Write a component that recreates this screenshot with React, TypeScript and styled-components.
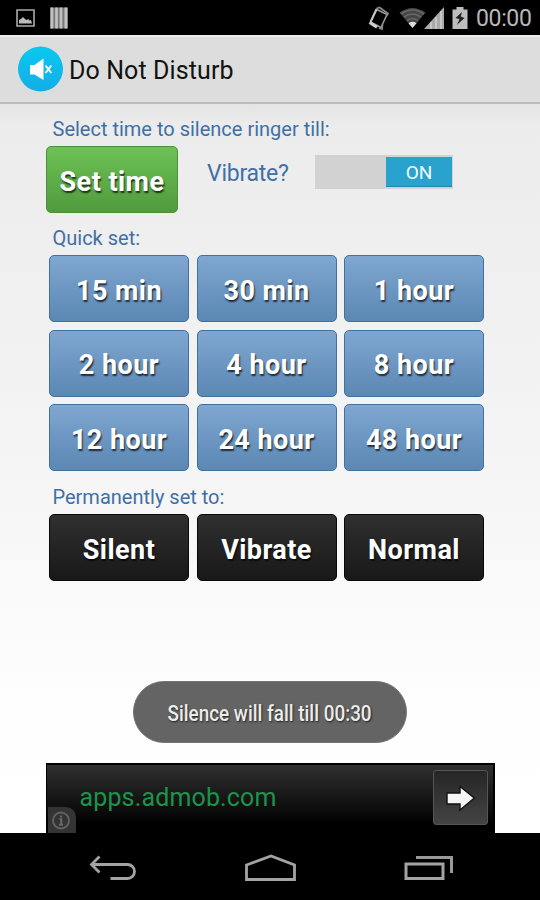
import React from "react";
import styled, { createGlobalStyle } from "styled-components";

const GlobalStyle = createGlobalStyle`
  * { box-sizing: border-box; }
  body { margin: 0; background: #fff; }
  button { border: 0; padding: 0; font: inherit; }
`;

const Screen = styled.div`
  width: 540px;
  height: 900px;
  display: flex;
  flex-direction: column;
  overflow: hidden;
  font-family: Roboto, sans-serif;
  background: #000;
`;

const StatusBar = styled.header`
  height: 35px;
  display: flex;
  align-items: center;
  justify-content: space-between;
  padding: 0 8px 0 16px;
  background: #000;
`;

const StatusIcons = styled.div`
  display: flex;
  align-items: center;
  height: 35px;
`;

const Clock = styled.span`
  margin-left: 8px;
  width: 56px;
  font-size: 23px;
  line-height: 35px;
  letter-spacing: -0.35px;
  padding-top: 2px;
  color: #b8b8b8;
  white-space: nowrap;
`;

const ActionBar = styled.div`
  height: 69px;
  display: flex;
  align-items: center;
  gap: 6px;
  padding: 0 18px 1px;
  background: #dddddd;
  border-top: 2px solid #ededed;
  border-bottom: 2px solid #bcbcbc;
`;

const Title = styled.h1`
  margin: 4px 0 0;
  font-size: 25px;
  font-weight: 400;
  letter-spacing: 0.1px;
  line-height: 32px;
  color: #111;
  white-space: nowrap;
`;

const Content = styled.main`
  flex: 1;
  display: flex;
  flex-direction: column;
  padding: 0 45px 0 46px;
  background: linear-gradient(#e4e4e4 0, #ececec 20px, #eeeeee 110px, #f5f5f5 370px, #fefefe 600px, #ffffff 100%);
`;

const Caption = styled.div<{ $top: number }>`
  height: 24px;
  margin: ${(p) => p.$top}px 0 0 6.5px;
  font-size: 20px;
  line-height: 24px;
  color: #4070a6;
  white-space: nowrap;
`;

const TimeRow = styled.div`
  display: flex;
  height: 67px;
  margin-top: 5px;
`;

const fills = {
  green: "linear-gradient(#6dc255, #509a3d)",
  blue: "linear-gradient(#7fa7d1, #5b87b3)",
  black: "linear-gradient(#303030, #181818)",
};
const edges = { green: "#4b9139", blue: "#41729f", black: "#080808" };

const PushButton = styled.button<{ $tone: keyof typeof fills; $width?: number }>`
  width: ${(p) => (p.$width ? `${p.$width}px` : "auto")};
  height: 67px;
  padding-top: 4px;
  border: 1.5px solid ${(p) => edges[p.$tone]};
  border-radius: 5px;
  background: ${(p) => fills[p.$tone]} border-box;
  color: #fff;
  font-size: 27px;
  font-weight: 700;
  line-height: 32px;
  letter-spacing: 0.45px;
  text-shadow: 1px 1.5px 1.5px rgba(0, 0, 0, 0.7);
  white-space: nowrap;
`;

const VibrateLabel = styled.span`
  width: 108px;
  margin: 14px 0 0 29px;
  font-size: 23px;
  line-height: 28px;
  letter-spacing: -0.25px;
  color: #4070a6;
`;

const Toggle = styled.div`
  width: 138px;
  height: 34px;
  margin-top: 9px;
  padding: 2px 1px 2px;
  display: flex;
  justify-content: flex-end;
  background: #d2d2d2;
`;

const Thumb = styled.div`
  width: 66px;
  height: 30px;
  background: #29a3cd;
  border-bottom: 1px solid #2188ad;
  color: #f3fbff;
  font-size: 19px;
  line-height: 32px;
  text-align: center;
`;

const ButtonGrid = styled.div<{ $top: number }>`
  display: grid;
  grid-template-columns: repeat(3, 140px);
  column-gap: 7.5px;
  row-gap: 7.5px;
  margin: ${(p) => p.$top}px 0 0 3px;
`;

const Toast = styled.div`
  width: 274px;
  height: 62px;
  margin: 100px 0 0 87px;
  border-radius: 31px;
  border: 1px solid #747474;
  background: #646464;
  display: flex;
  align-items: center;
  justify-content: center;
`;

const ToastText = styled.span`
  flex: none;
  font-size: 22.5px;
  font-weight: 500;
  line-height: 28px;
  padding-top: 2px;
  color: #ececec;
  text-shadow: 1px 1px 2px rgba(0, 0, 0, 0.7);
  white-space: nowrap;
  transform: scaleX(0.84);
`;

const AdBanner = styled.aside`
  position: relative;
  height: 70px;
  margin-top: auto;
  display: flex;
  justify-content: space-between;
  padding: 6px 5px 0 32.5px;
  border: solid #000;
  border-width: 2px 2px 0 1px;
  background: linear-gradient(#303030, #151515 50%, #000 88%);
`;

const AdLink = styled.span`
  margin-top: 11px;
  font-size: 25px;
  line-height: 32px;
  letter-spacing: 0.15px;
  color: #1c944b;
`;

const AdArrow = styled.div`
  width: 55px;
  height: 55px;
  margin-top: -1px;
  border: 1.5px solid #555;
  border-radius: 3px;
  background: linear-gradient(#262626, #444);
  display: flex;
  align-items: center;
  justify-content: center;
`;

const InfoCorner = styled.div`
  position: absolute;
  left: 1px;
  bottom: 0;
  width: 28px;
  height: 26px;
  padding: 2px 0 0 2px;
  border-top-right-radius: 10px;
  background: #343434;
`;

const NavBar = styled.footer`
  height: 67px;
  display: flex;
  align-items: center;
  justify-content: space-between;
  padding: 3px 86px 0 89px;
  background: #000;
`;

const Spacer = styled.span<{ $size: number }>`
  width: ${(p) => p.$size}px;
`;

const quickTimes = ["15 min", "30 min", "1 hour", "2 hour", "4 hour", "8 hour", "12 hour", "24 hour", "48 hour"];
const modes = ["Silent", "Vibrate", "Normal"];

const PictureIcon = () => (
  <svg width="19" height="18" viewBox="0 0 19 18">
    <path d="M1 1H18V17H1Z" fill="none" stroke="#aaa" strokeWidth="1.6" />
    <path d="M3 14.5V11l2-1 2-2 2 2 1.5 1 2-1 1 1.5 1.5-.5 1 3.5Z" fill="#bcbcbc" />
  </svg>
);

const BarsIcon = () => (
  <svg width="18" height="22" viewBox="0 0 18 22">
    <path d="M0 .5H18V21.5H0Z" fill="#777" />
    <path d="M2 .5V21.5M6.5 .5V21.5M11 .5V21.5M15.8 .5V21.5" stroke="#c2c2c2" strokeWidth="2.7" />
  </svg>
);

const RotateIcon = () => (
  <svg width="22" height="26" viewBox="0 0 22 26">
    <path d="M8.3 4.2L19 9.5L13 22.5L2.5 17Z" fill="none" stroke="#999" strokeWidth="1.6" strokeLinejoin="round" />
    <path d="M8.5 4.5L2.5 17" stroke="#c4c4c4" strokeWidth="2" />
    <path d="M1.5 17.6L9 22.3" stroke="#d0d0d0" strokeWidth="3" />
    <path d="M8.5 3.5L11.5 2.5L20 8.5L18.5 11M14.5 19.5L14 24L11 23" stroke="#888" strokeWidth="1.8" fill="none" />
  </svg>
);

const SignalIcons = () => (
  <svg width="46" height="24" viewBox="0 0 46 24">
    <path d="M.5 6.5Q13.5-2.5 26.5 6.5L13.5 22Z" fill="#454545" />
    <path d="M2 8Q13.5 0 25 8M5 11Q13.5 5 22 11M8 15Q13.5 10 19 15" stroke="#686868" strokeWidth="1.6" fill="none" />
    <path d="M9.5 17.2Q13.5 14.5 17.5 17.2L13.5 22Z" fill="#ddd" />
    <path d="M25 23L45 1V23Z" fill="#aaa" />
    <path d="M32 16V23M37 11V23M42 5V23" stroke="#c9c9c9" strokeWidth="1.8" />
  </svg>
);

const BatteryIcon = () => (
  <svg width="16" height="24" viewBox="0 0 16 24">
    <path d="M4.5 1H11.5V3.5H15.5V23H.5V3.5H4.5Z" fill="#bdbdbd" />
    <path d="M10 6L3.5 12 7.5 13.3 4.8 19 12.5 12 8.8 10.6Z" fill="#222" />
  </svg>
);

const AppIcon = () => (
  <svg width="45" height="46" viewBox="0 0 45 46">
    <defs>
      <linearGradient id="sky" x1="0" y1="0" x2="0" y2="1">
        <stop offset="0" stopColor="#08c9ef" />
        <stop offset="1" stopColor="#14ade8" />
      </linearGradient>
    </defs>
    <circle cx="22.5" cy="23" r="22.5" fill="url(#sky)" />
    <path d="M12 19H16.5L25.5 12.5V34L16.5 28.5H12Z" fill="#fff" />
    <path d="M27.5 19.5L33.3 27M33.3 19.5L27.5 27" stroke="#fff" strokeWidth="1.9" />
  </svg>
);

const InfoIcon = () => (
  <svg width="20" height="21" viewBox="0 0 20 21">
    <circle cx="11" cy="11.5" r="8" fill="none" stroke="#636363" strokeWidth="1.9" />
    <path d="M11 6.5V8.5M9.5 10.3H11.2V15.5M9 15.7H13" stroke="#686868" strokeWidth="2.1" fill="none" />
  </svg>
);

const ArrowIcon = () => (
  <svg width="32" height="28" viewBox="0 0 32 28">
    <path d="M2 9H15V2.5L29.3 14 15 26V20H2Z" fill="#f5f5f5" stroke="#111" strokeWidth="1.4" />
  </svg>
);

const BackIcon = () => (
  <svg width="48" height="28" viewBox="0 0 48 28">
    <path d="M2 10.5H38.5A7 7 0 0 1 38.5 24.5H21.5M10.5 2.5L2.5 10.5L10.5 18.5" fill="none" stroke="#a3a3a3" strokeWidth="2.8" />
  </svg>
);

const HomeIcon = () => (
  <svg width="52" height="28" viewBox="0 0 52 28">
    <path d="M1.5 11L26 2L49.5 11V25.5H1.5Z" fill="none" stroke="#a3a3a3" strokeWidth="2.8" />
  </svg>
);

const RecentIcon = () => (
  <svg width="50" height="26" viewBox="0 0 50 26">
    <path d="M2 9H39V23.5H2Z" fill="none" stroke="#a3a3a3" strokeWidth="3" />
    <path d="M12 2.5H47.5V18" fill="none" stroke="#999" strokeWidth="3" />
  </svg>
);

export default function App() {
  return (
    <Screen>
      <GlobalStyle />
      <StatusBar>
        <StatusIcons>
          <PictureIcon />
          <Spacer $size={15} />
          <BarsIcon />
        </StatusIcons>
        <StatusIcons>
          <RotateIcon />
          <Spacer $size={9} />
          <SignalIcons />
          <Spacer $size={7} />
          <BatteryIcon />
          <Clock>00:00</Clock>
        </StatusIcons>
      </StatusBar>
      <ActionBar>
        <AppIcon />
        <Title>Do Not Disturb</Title>
      </ActionBar>
      <Content>
        <Caption $top={13}>Select time to silence ringer till:</Caption>
        <TimeRow>
          <PushButton $tone="green" $width={132}>Set time</PushButton>
          <VibrateLabel>Vibrate?</VibrateLabel>
          <Toggle role="switch" aria-checked="true">
            <Thumb>ON</Thumb>
          </Toggle>
        </TimeRow>
        <Caption $top={13}>Quick set:</Caption>
        <ButtonGrid $top={5}>
          {quickTimes.map((time) => (
            <PushButton key={time} $tone="blue">{time}</PushButton>
          ))}
        </ButtonGrid>
        <Caption $top={14}>Permanently set to:</Caption>
        <ButtonGrid $top={5}>
          {modes.map((mode) => (
            <PushButton key={mode} $tone="black">{mode}</PushButton>
          ))}
        </ButtonGrid>
        <Toast role="status">
          <ToastText>Silence will fall till 00:30</ToastText>
        </Toast>
        <AdBanner>
          <AdLink>apps.admob.com</AdLink>
          <AdArrow>
            <ArrowIcon />
          </AdArrow>
          <InfoCorner>
            <InfoIcon />
          </InfoCorner>
        </AdBanner>
      </Content>
      <NavBar>
        <BackIcon />
        <HomeIcon />
        <RecentIcon />
      </NavBar>
    </Screen>
  );
}
